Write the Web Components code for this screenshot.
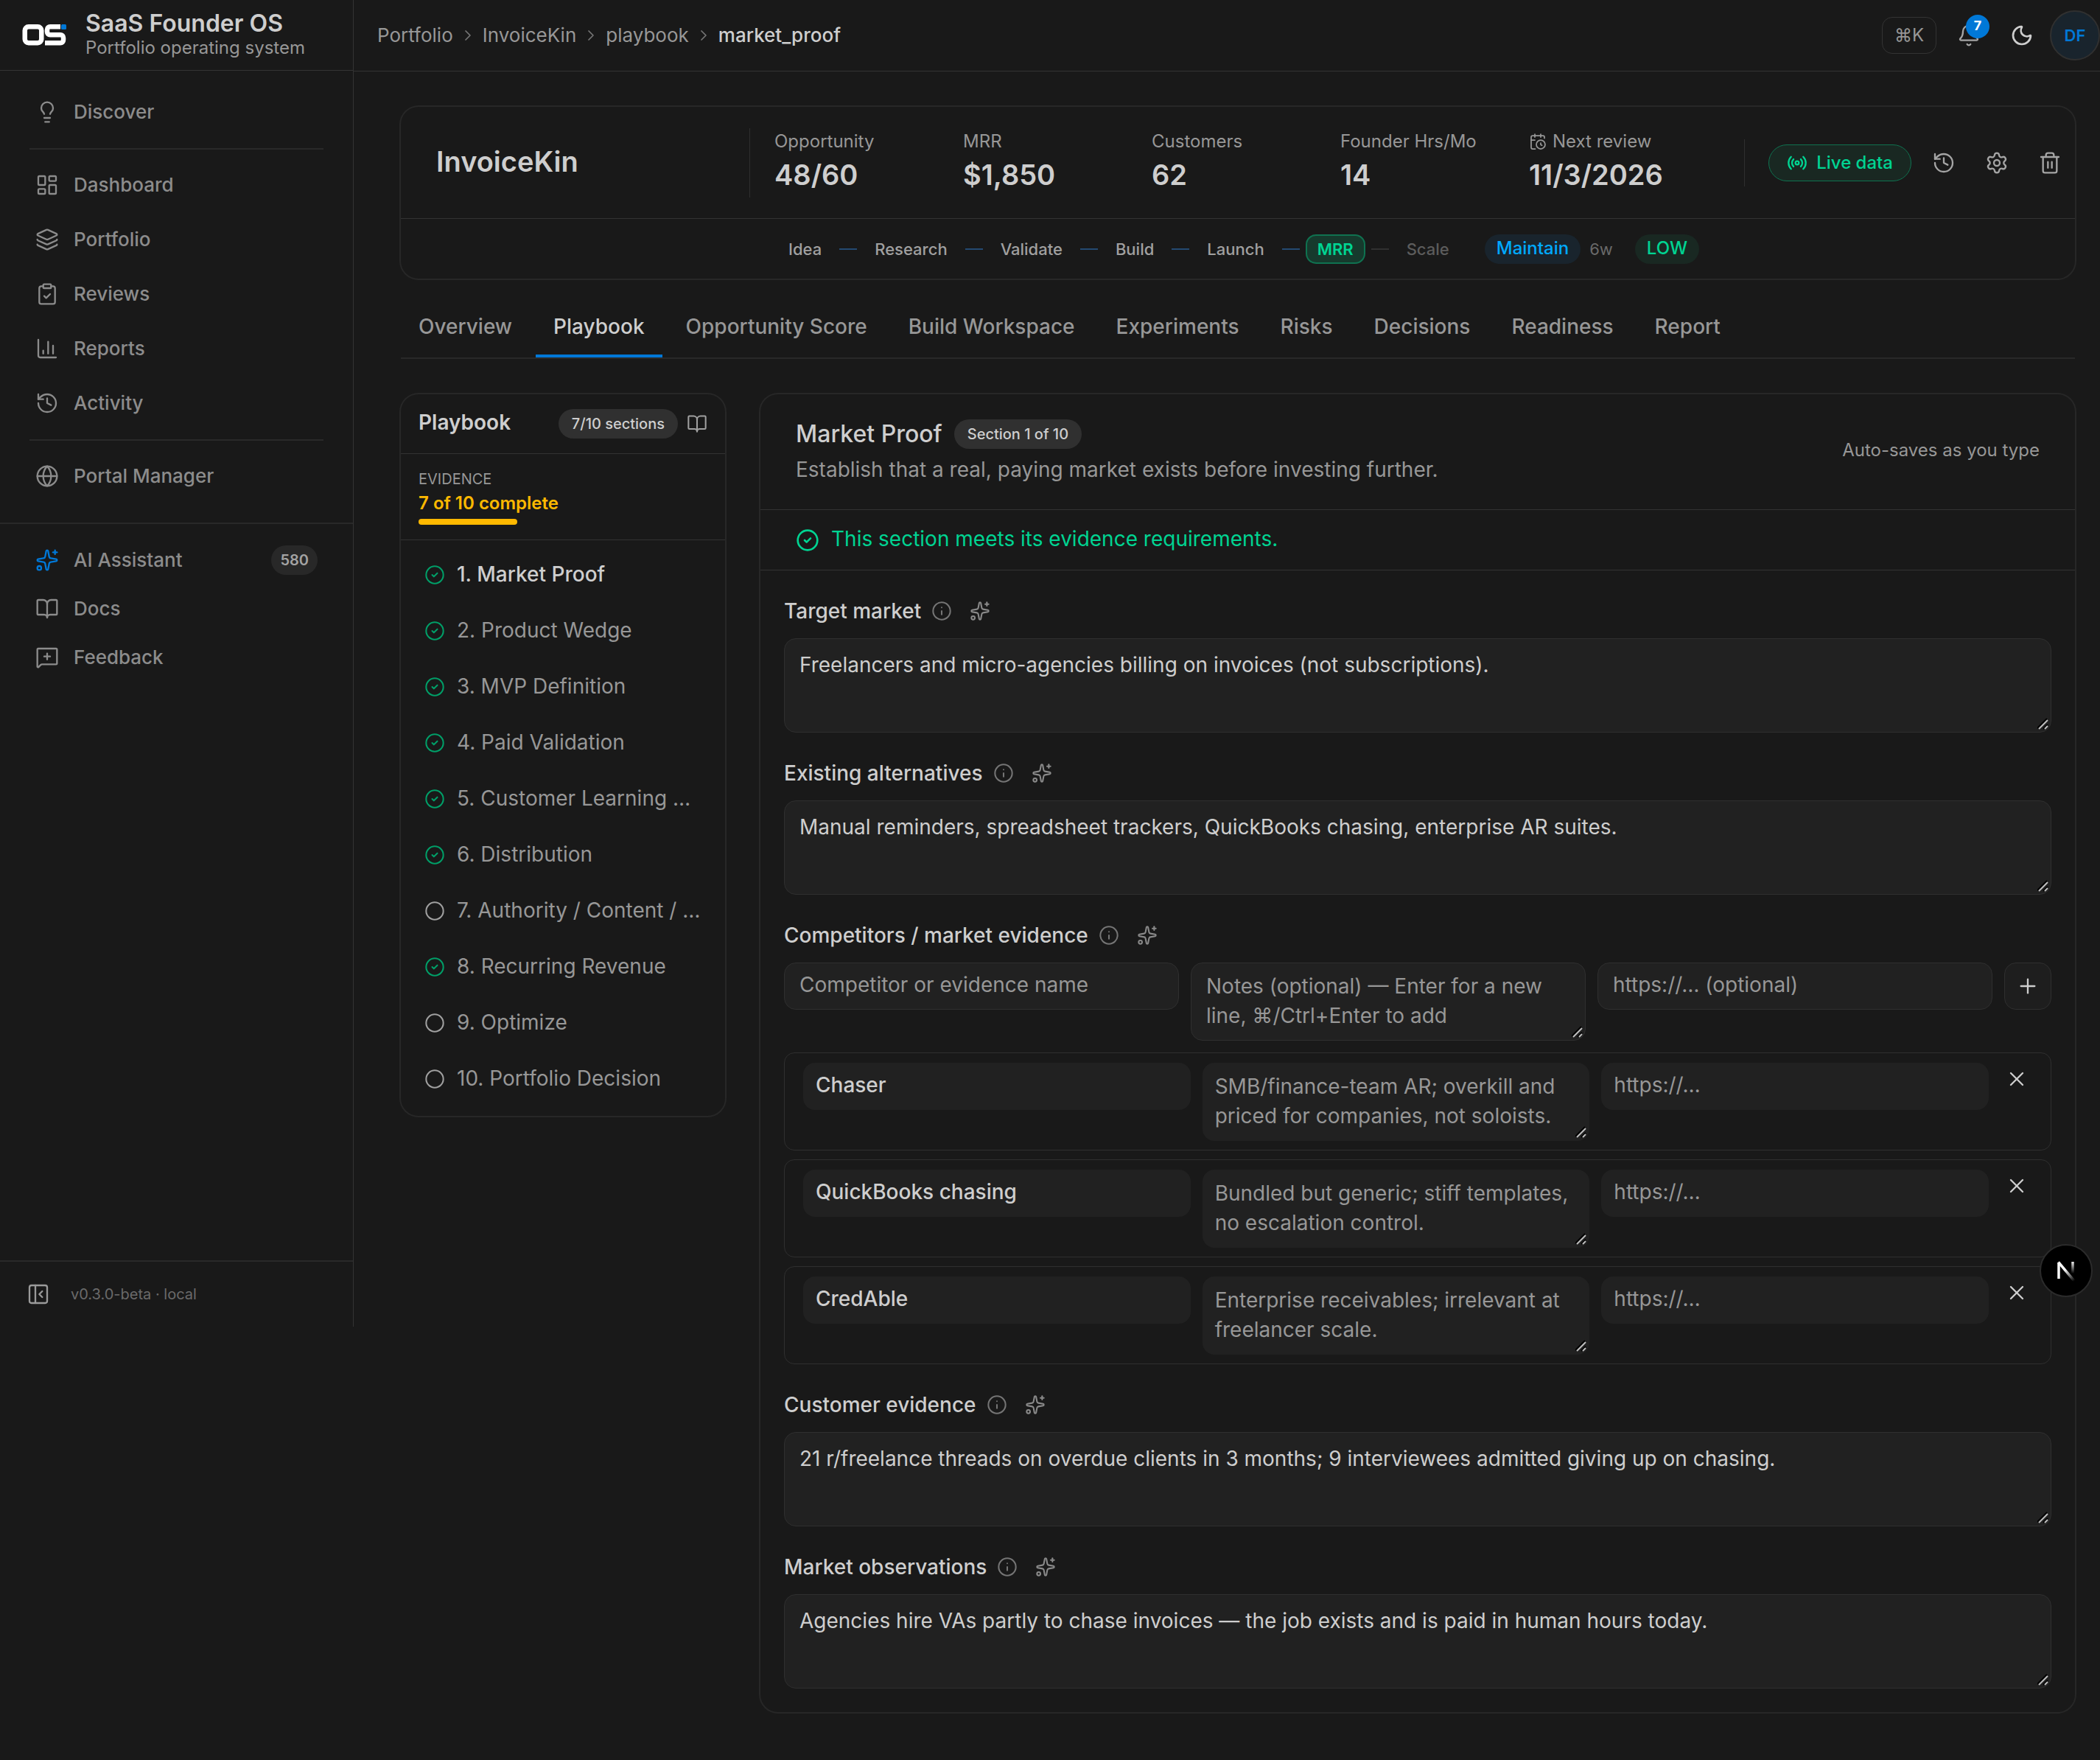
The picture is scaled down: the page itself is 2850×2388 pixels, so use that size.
<!DOCTYPE html>
<html lang="en">
<head>
<meta charset="utf-8">
<title>InvoiceKin · Playbook · SaaS Founder OS</title>
<style>
:root{
  --bg:#191919; --field:#212121; --line:#2f2f2f; --ring:#272727; --chip:#303030;
  --fg:#cecece; --muted:#979797; --nav:#8c8c8c; --dim:#6a6a6a;
  --blue:#0078d7; --green:#00d492; --amber:#ffb900;
}
*{box-sizing:border-box}
html{background:var(--bg)}
body{margin:0;background:var(--bg);color:var(--fg);font:400 28px/40px Inter,"Noto Sans","DejaVu Sans",sans-serif;color-scheme:dark}
</style>
</head>
<body>
<founder-app></founder-app>

<script>
const ICONS = {
  bulb:'<path d="M15 14c.2-1 .7-1.7 1.5-2.5 1-.9 1.5-2.2 1.5-3.5A6 6 0 0 0 6 8c0 1 .2 2.2 1.5 3.5.7.7 1.3 1.5 1.5 2.5"/><path d="M9 18h6"/><path d="M10 22h4"/>',
  dashboard:'<rect width="7" height="9" x="3" y="3" rx="1"/><rect width="7" height="5" x="14" y="3" rx="1"/><rect width="7" height="9" x="14" y="12" rx="1"/><rect width="7" height="5" x="3" y="16" rx="1"/>',
  layers:'<path d="M12.83 2.18a2 2 0 0 0-1.66 0L2.6 6.08a1 1 0 0 0 0 1.83l8.58 3.91a2 2 0 0 0 1.66 0l8.58-3.9a1 1 0 0 0 0-1.83z"/><path d="M2 12a1 1 0 0 0 .58.91l8.6 3.91a2 2 0 0 0 1.65 0l8.58-3.9A1 1 0 0 0 22 12"/><path d="M2 17a1 1 0 0 0 .58.91l8.6 3.91a2 2 0 0 0 1.65 0l8.58-3.9A1 1 0 0 0 22 17"/>',
  clipboard:'<rect width="8" height="4" x="8" y="2" rx="1"/><path d="M16 4h2a2 2 0 0 1 2 2v14a2 2 0 0 1-2 2H6a2 2 0 0 1-2-2V6a2 2 0 0 1 2-2h2"/><path d="m9 14 2 2 4-4"/>',
  chart:'<path d="M3 3v16a2 2 0 0 0 2 2h16"/><path d="M18 17V9"/><path d="M13 17V5"/><path d="M8 17v-3"/>',
  history:'<path d="M3 12a9 9 0 1 0 9-9 9.75 9.75 0 0 0-6.74 2.74L3 8"/><path d="M3 3v5h5"/><path d="M12 7v5l4 2"/>',
  globe:'<circle cx="12" cy="12" r="10"/><path d="M12 2a14.5 14.5 0 0 0 0 20 14.5 14.5 0 0 0 0-20"/><path d="M2 12h20"/>',
  sparkles:'<path d="M11.017 2.814a1 1 0 0 1 1.966 0l1.051 5.558a2 2 0 0 0 1.594 1.594l5.558 1.051a1 1 0 0 1 0 1.966l-5.558 1.051a2 2 0 0 0-1.594 1.594l-1.051 5.558a1 1 0 0 1-1.966 0l-1.051-5.558a2 2 0 0 0-1.594-1.594l-5.558-1.051a1 1 0 0 1 0-1.966l5.558-1.051a2 2 0 0 0 1.594-1.594z"/><path d="M20 2v4"/><path d="M22 4h-4"/><circle cx="4" cy="20" r="2"/>',
  book:'<path d="M12 7v14"/><path d="M3 18a1 1 0 0 1-1-1V4a1 1 0 0 1 1-1h5a4 4 0 0 1 4 4 4 4 0 0 1 4-4h5a1 1 0 0 1 1 1v13a1 1 0 0 1-1 1h-6a3 3 0 0 0-3 3 3 3 0 0 0-3-3z"/>',
  feedback:'<path d="M22 18a1 1 0 0 1-1 1H6.8a2 2 0 0 0-1.4.586l-2.2 2.202A.71.71 0 0 1 2 21.286V4a1 1 0 0 1 1-1h18a1 1 0 0 1 1 1z"/><path d="M12 8v6"/><path d="M9 11h6"/>',
  panel:'<rect width="18" height="18" x="3" y="3" rx="2"/><path d="M9 3v18"/><path d="m16 15-3-3 3-3"/>',
  chevron:'<path d="m9 18 6-6-6-6"/>',
  bell:'<path d="M10.268 21a2 2 0 0 0 3.464 0"/><path d="M3.262 15.326A1 1 0 0 0 4 17h16a1 1 0 0 0 .74-1.673C19.41 13.956 18 12.499 18 8A6 6 0 0 0 6 8c0 4.499-1.411 5.956-2.738 7.326"/>',
  moon:'<path d="M20.985 12.486a9 9 0 1 1-9.473-9.472c.405-.022.617.46.402.803a6 6 0 0 0 8.268 8.268c.344-.215.825-.004.803.401"/>',
  calendar:'<path d="M16 14v2.2l1.6 1"/><path d="M16 2v4"/><path d="M21 7.5V6a2 2 0 0 0-2-2H5a2 2 0 0 0-2 2v14a2 2 0 0 0 2 2h3.5"/><path d="M3 10h5"/><path d="M8 2v4"/><circle cx="16" cy="16" r="6"/>',
  radio:'<path d="M16.247 7.761a6 6 0 0 1 0 8.478"/><path d="M19.075 4.933a10 10 0 0 1 0 14.134"/><path d="M4.925 19.067a10 10 0 0 1 0-14.134"/><path d="M7.753 16.239a6 6 0 0 1 0-8.478"/><circle cx="12" cy="12" r="2"/>',
  gear:'<path d="M9.671 4.136a2.34 2.34 0 0 1 4.659 0 2.34 2.34 0 0 0 3.319 1.915 2.34 2.34 0 0 1 2.33 4.033 2.34 2.34 0 0 0 0 3.831 2.34 2.34 0 0 1-2.33 4.033 2.34 2.34 0 0 0-3.319 1.915 2.34 2.34 0 0 1-4.659 0 2.34 2.34 0 0 0-3.32-1.915 2.34 2.34 0 0 1-2.33-4.033 2.34 2.34 0 0 0 0-3.831A2.34 2.34 0 0 1 6.35 6.051a2.34 2.34 0 0 0 3.319-1.915"/><circle cx="12" cy="12" r="3"/>',
  trash:'<path d="M10 11v6"/><path d="M14 11v6"/><path d="M19 6v14a2 2 0 0 1-2 2H7a2 2 0 0 1-2-2V6"/><path d="M3 6h18"/><path d="M8 6V4a2 2 0 0 1 2-2h4a2 2 0 0 1 2 2v2"/>',
  check:'<circle cx="12" cy="12" r="10"/><path d="m9 12 2 2 4-4"/>',
  circle:'<circle cx="12" cy="12" r="10"/>',
  info:'<circle cx="12" cy="12" r="10"/><path d="M12 16v-4"/><path d="M12 8h.01"/>',
  x:'<path d="M18 6 6 18"/><path d="m6 6 12 12"/>',
  plus:'<path d="M5 12h14"/><path d="M12 5v14"/>'
};

const RESET = `*{box-sizing:border-box}
button{font:inherit;color:inherit;background:none;border:0;padding:0;margin:0;display:inline-flex;align-items:center;justify-content:center;cursor:pointer}
a{color:inherit;text-decoration:none}
h1,h2,h3,p,ul,ol,dl,dt,dd{margin:0;padding:0;font:inherit;list-style:none}`;

function define(tag, css, view){
  customElements.define(tag, class extends HTMLElement{
    connectedCallback(){
      if(this.shadowRoot) return;
      const t = document.createElement('template');
      t.innerHTML = `<style>${RESET}${css}</style>` + view(n => this.getAttribute(n) ?? '', this);
      this.attachShadow({mode:'open'}).append(t.content.cloneNode(true));
    }
  });
}

define('ui-icon', `
:host{display:inline-flex;flex:none;width:32px;height:32px}
:host([small]){width:28px;height:28px}
:host([tiny]){width:24px;height:24px}
svg{width:100%;height:100%;display:block}`,
a => `<svg viewBox="0 0 24 24" fill="none" stroke="currentColor" stroke-width="${a('weight')||'1.75'}" stroke-linecap="round" stroke-linejoin="round" aria-hidden="true">${ICONS[a('name')]}</svg>`);

define('ui-chip', `
:host{display:inline-flex;align-items:center;height:40px;padding:0 18px;border-radius:20px;background:var(--chip);color:var(--fg);font-size:20px;line-height:28px;font-weight:500;white-space:nowrap}
:host([tone=count]){background:#282828;color:#a3a3a3;font-weight:600;padding:0 12px}
:host([tone=info]){background:#19242d;color:#00a9ff;font-size:24px;padding:0 16px 2px}
:host([tone=good]){background:#192822;color:var(--green);font-size:24px;padding:0 16px 2px}`,
() => `<slot></slot>`);

/* ---------- sidebar ---------- */
define('brand-mark', `
:host{display:block;flex:none;width:60px;height:32px}
svg{display:block}`,
() => `<svg width="60" height="32" viewBox="0 0 60 32" aria-hidden="true" fill="none" stroke="#fff" stroke-width="6.5">
<rect x="3.75" y="5.25" width="22.5" height="22" rx="5"/>
<path d="M52 5.25H38a4 4 0 0 0-4 4v3a4 4 0 0 0 4 4h14a4 4 0 0 1 4 4v3a4 4 0 0 1-4 4H31"/>
<rect x="53" y="2" width="7" height="7" rx="1.5" fill="#0078d7" stroke="none"/></svg>`);

define('nav-item', `
:host{display:block}
a{display:flex;align-items:center;gap:20px;height:70px;padding:0 24px;color:var(--nav);font-size:26px;line-height:36px;font-weight:500}
:host([compact]) a{height:66px}
.t{flex:1}
:host([accent]) ui-icon{color:var(--blue)}`,
a => `<a href="#"><ui-icon name="${a('icon')}"></ui-icon><span class="t"><slot></slot></span><slot name="end"></slot></a>`);

define('app-sidebar', `
:host{display:flex;flex-direction:column;flex:none;width:480px;height:1800px;border-right:1px solid #333}
header{display:flex;align-items:center;gap:26px;height:96px;padding:0 0 2px 30px;border-bottom:1px solid #333}
.name{font-size:32px;line-height:36px;font-weight:600}
.sub{font-size:24px;line-height:30px;color:var(--muted)}
nav{padding:21px 24px 28px}
.group{display:flex;flex-direction:column;gap:4px}
hr{border:0;height:2px;background:#292929;margin:14px 16px 13px}
.low{border-top:2px solid #292929;padding:16px 24px;flex:1}
footer{display:flex;align-items:center;gap:28px;height:90px;padding-left:36px;border-top:2px solid #292929;color:var(--dim);font-size:20px;line-height:28px}
footer button{color:#9a9a9a}`,
() => `
<header><brand-mark></brand-mark><div><div class="name">SaaS Founder OS</div><div class="sub">Portfolio operating system</div></div></header>
<nav aria-label="Main">
  <nav-item icon="bulb">Discover</nav-item>
  <hr>
  <div class="group">
    <nav-item icon="dashboard">Dashboard</nav-item>
    <nav-item icon="layers">Portfolio</nav-item>
    <nav-item icon="clipboard">Reviews</nav-item>
    <nav-item icon="chart">Reports</nav-item>
    <nav-item icon="history">Activity</nav-item>
  </div>
  <hr>
  <nav-item icon="globe">Portal Manager</nav-item>
</nav>
<div class="low">
  <nav-item compact accent icon="sparkles">AI Assistant<ui-chip slot="end" tone="count">580</ui-chip></nav-item>
  <nav-item compact icon="book">Docs</nav-item>
  <nav-item compact icon="feedback">Feedback</nav-item>
</div>
<footer><button aria-label="Collapse sidebar"><ui-icon name="panel"></ui-icon></button>v0.3.0-beta · local</footer>`);

/* ---------- top bar ---------- */
define('app-topbar', `
:host{display:flex;align-items:center;justify-content:space-between;height:97px;border-bottom:1px solid #333;padding-left:32px}
nav{display:flex;align-items:center;gap:8px;font-size:26px;line-height:36px;color:var(--muted)}
nav ui-icon{color:#757575}
nav b{font-weight:500;color:var(--fg)}
.right,.icons{display:flex;align-items:center}
.right{gap:10px}.icons{gap:4px}
.key{height:50px;width:74px;border:1px solid #333;border-radius:14px;font-size:24px;line-height:32px;color:var(--muted)}
.icons button{width:68px;height:68px;position:relative}
.bell{color:#a5a5a5}
.n{position:absolute;left:30px;top:6px;width:32px;height:32px;border-radius:50%;background:var(--blue);color:#fff;font-size:18px;line-height:30px;font-weight:700;text-align:center}
.icons .me{border-radius:50%;border:2px solid #303030;background:#19242d;color:var(--blue);font-size:22px;font-weight:600}`,
() => `
<nav aria-label="Breadcrumb"><a href="#">Portfolio</a><ui-icon tiny name="chevron"></ui-icon><a href="#">InvoiceKin</a><ui-icon tiny name="chevron"></ui-icon><a href="#">playbook</a><ui-icon tiny name="chevron"></ui-icon><b>market_proof</b></nav>
<div class="right"><button class="key">⌘K</button>
<div class="icons"><button class="bell" aria-label="Notifications"><ui-icon name="bell"></ui-icon><span class="n">7</span></button><button aria-label="Theme"><ui-icon name="moon" weight="2"></ui-icon></button><button class="me">DF</button></div></div>`);

/* ---------- project header ---------- */
define('stat-item', `
:host{display:block;width:256px}
dl{padding-bottom:4px}
dt{display:flex;align-items:center;gap:8px;font-size:24px;line-height:36px;color:var(--muted)}
dd{font-size:38px;line-height:54px;font-weight:600;white-space:nowrap}`,
a => `<dl><dt>${a('icon')?`<ui-icon tiny name="${a('icon')}"></ui-icon>`:''}${a('label')}</dt><dd><slot></slot></dd></dl>`);

define('stage-track', `
:host{display:flex;align-items:center;gap:8px;font-size:22px;line-height:28px;font-weight:500;color:#a0a0a0}
span{padding:0 16px}
i{width:24px;height:2px;background:#244a72}
i.off{background:#303030}
.on{border:2px solid #0f7250;background:#163a2d;color:var(--green);font-weight:600;border-radius:14px;padding:0 14px;height:40px;line-height:36px}
.next{color:#5c5c5c}`,
() => ['Idea','Research','Validate','Build','Launch'].map(s => `<span>${s}</span><i></i>`).join('') + `<span class="on">MRR</span><i class="off"></i><span class="next">Scale</span>`);

define('project-header', `
:host{display:block;border-radius:24px;box-shadow:0 0 0 2px var(--ring)}
.top{display:flex;align-items:center;height:152px;border-bottom:1px solid #333;padding-left:48px}
h1{width:425px;font-size:38px;line-height:54px;font-weight:600;padding-bottom:4px}
.stats{display:flex;flex:1;border-left:1px solid var(--line);padding-left:33px}
.acts{display:flex;align-items:center;height:64px;border-left:1px solid var(--line);padding-left:32px;gap:4px;color:#a5a5a5}
.acts button{width:68px;height:50px}
.acts .live{width:auto;padding:0 24px;gap:12px;border:1px solid #0f7250;border-radius:25px;background:#192822;color:var(--green);font-size:24px;line-height:32px;font-weight:500;margin-right:6px}
.bottom{display:flex;align-items:center;justify-content:center;height:81px}
.tags{display:flex;align-items:center;gap:12px;margin-left:32px;font-size:22px;line-height:28px;color:var(--dim)}
.tags .w{margin-right:18px}`,
() => `
<div class="top"><h1>InvoiceKin</h1>
<div class="stats"><stat-item label="Opportunity">48/60</stat-item><stat-item label="MRR">$1,850</stat-item><stat-item label="Customers">62</stat-item><stat-item label="Founder Hrs/Mo">14</stat-item><stat-item label="Next review" icon="calendar">11/3/2026</stat-item></div>
<div class="acts"><button class="live"><ui-icon small name="radio" weight="2"></ui-icon>Live data</button><button aria-label="History"><ui-icon name="history"></ui-icon></button><button aria-label="Settings"><ui-icon name="gear"></ui-icon></button><button aria-label="Delete"><ui-icon name="trash"></ui-icon></button></div></div>
<div class="bottom"><stage-track></stage-track><div class="tags"><ui-chip tone="info">Maintain</ui-chip><span class="w">6w</span><ui-chip tone="good">LOW</ui-chip></div></div>`);

define('tab-bar', `
:host{display:flex;gap:8px;border-bottom:2px solid #292929;height:84px}
a{display:flex;align-items:center;height:82px;padding:2px 24px 0;border-bottom:4px solid transparent;font-size:28px;font-weight:500;color:var(--muted)}
a[aria-current]{color:var(--fg);border-color:var(--blue)}`,
() => ['Overview','Playbook','Opportunity Score','Build Workspace','Experiments','Risks','Decisions','Readiness','Report'].map(t => `<a href="#"${t==='Playbook'?' aria-current="page"':''}>${t}</a>`).join(''));

/* ---------- playbook index ---------- */
define('step-item', `
:host{display:block}
a{display:flex;align-items:center;gap:16px;height:76px;padding:0 24px 0 32px;color:var(--muted);white-space:nowrap;overflow:hidden}
span{padding-bottom:2px}
ui-icon{color:#a0a0a0}
:host([done]) ui-icon{color:#009f68}
:host([current]) a{color:var(--fg);font-weight:500}`,
(a,el) => `<a href="#"><ui-icon small name="${el.hasAttribute('done')?'check':'circle'}"></ui-icon><span><slot></slot></span></a>`);

define('playbook-index', `
:host{display:block;border-radius:24px;box-shadow:0 0 0 2px var(--ring)}
header{display:flex;align-items:center;gap:12px;height:81px;padding:0 24px;border-bottom:1px solid #333}
h2{flex:1;font-weight:600;padding-bottom:4px}
header ui-icon{color:#a0a0a0}
.ev{height:117px;padding:19px 24px 0;border-bottom:1px solid #333}
.k{font-size:20px;line-height:30px;color:var(--muted)}
.v{font-size:24px;line-height:36px;font-weight:600;color:var(--amber)}
.bar{width:192px;height:8px;margin-top:3px}
.bar div{width:70%;height:8px;border-radius:4px;background:var(--amber)}
.list{padding:9px 0 12px}`,
() => `
<header><h2>Playbook</h2><ui-chip>7/10 sections</ui-chip><ui-icon small name="book"></ui-icon></header>
<div class="ev"><div class="k">EVIDENCE</div><div class="v">7 of 10 complete</div><div class="bar"><div></div></div></div>
<div class="list">
<step-item done current>1. Market Proof</step-item><step-item done>2. Product Wedge</step-item><step-item done>3. MVP Definition</step-item><step-item done>4. Paid Validation</step-item><step-item done>5. Customer Learning …</step-item><step-item done>6. Distribution</step-item><step-item>7. Authority / Content / …</step-item><step-item done>8. Recurring Revenue</step-item><step-item>9. Optimize</step-item><step-item>10. Portfolio Decision</step-item></div>`);

/* ---------- form ---------- */
const FIELD = `
input,textarea{display:block;width:100%;margin:0;font:400 28px/40px Inter,"Noto Sans","DejaVu Sans",sans-serif;color:var(--fg);background:var(--field);border:1px solid var(--line);border-radius:16px;outline:0;resize:none;overflow:hidden}
::placeholder{color:var(--muted);opacity:1}
input{height:64px;padding:0 20px 4px}
textarea{height:106px;padding:11px 20px 13px}
.area{position:relative}
.grip{position:absolute;right:4px;bottom:4px;width:15px;height:16px}`;
const GRIP = `<svg class="grip" viewBox="0 0 15 16" fill="none" stroke-width="2" aria-hidden="true"><path d="M0 14 13 1M8 15l6-6" stroke="#000"/><path d="M2 15 14 3M10 15l4-4" stroke="#bdbdbd"/></svg>`;
const LABEL = `
.label{display:flex;align-items:center;height:46px;margin-bottom:14px;font-weight:500;color:var(--fg)}
.label ui-icon{margin-left:14px;color:#757575}
.label button{margin-left:24px}
.label button ui-icon{margin:0;color:#8a8a8a}`;
const labelRow = (text,id) => `<div class="label"><label for="${id}">${text}</label><ui-icon small name="info"></ui-icon><button aria-label="Suggest ${text}"><ui-icon small name="sparkles"></ui-icon></button></div>`;

define('text-field', `:host{display:block}${FIELD}${LABEL} textarea{height:128px;padding-top:15px}`,
(a,el) => `${labelRow(a('label'),'f')}<div class="area"><textarea id="f">${el.textContent.trim()}</textarea>${GRIP}</div>`);

define('evidence-row', `
:host{display:grid;grid-template-columns:1fr 1fr 1fr 44px;gap:16px;align-items:start;border:1px solid var(--line);border-radius:14px;padding:13px 24px 12px 25px}
${FIELD}
input,textarea{border-color:transparent;padding-left:16px;padding-right:14px}
.name{font-weight:500}
textarea{color:var(--muted)}
button{height:44px}`,
(a,el) => `<input class="name" aria-label="Name" value="${a('name')}"><div class="area"><textarea aria-label="Notes">${el.textContent.trim()}</textarea>${GRIP}</div><input aria-label="Link" placeholder="https://…"><button aria-label="Remove"><ui-icon name="x"></ui-icon></button>`);

define('evidence-list', `
:host{display:block}${FIELD}${LABEL}
.add{display:grid;grid-template-columns:1fr 1fr 1fr 64px;gap:16px;align-items:start;margin-bottom:16px}
.add button{height:64px;border:1px solid var(--line);border-radius:16px;background:#1e1e1e}
.rows{display:grid;gap:12px}`,
() => `${labelRow('Competitors / market evidence','c')}
<div class="add"><input id="c" placeholder="Competitor or evidence name"><div class="area"><textarea aria-label="Notes" placeholder="Notes (optional) — Enter for a new line, ⌘/Ctrl+Enter to add"></textarea>${GRIP}</div><input aria-label="Link" placeholder="https://… (optional)"><button aria-label="Add"><ui-icon name="plus"></ui-icon></button></div>
<div class="rows">
<evidence-row name="Chaser">SMB/finance-team AR; overkill and priced for companies, not soloists.</evidence-row>
<evidence-row name="QuickBooks chasing">Bundled but generic; stiff templates, no escalation control.</evidence-row>
<evidence-row name="CredAble">Enterprise receivables; irrelevant at freelancer scale.</evidence-row></div>`);

define('section-panel', `
:host{display:block;border-radius:24px;box-shadow:0 0 0 2px var(--ring)}
header{display:flex;align-items:center;justify-content:space-between;height:157px;padding:0 48px;border-bottom:1px solid #333}
.t{display:flex;align-items:center;gap:16px;margin-bottom:8px}
h2{font-size:32px;line-height:40px;font-weight:500}
p{color:var(--muted)}
.auto{font-size:24px;line-height:32px;padding-bottom:4px;color:var(--muted)}
.ok{display:flex;align-items:center;gap:16px;height:82px;padding:0 48px;border-bottom:1px solid #333;color:var(--green)}
.ok span{padding-bottom:4px}
.body{display:grid;gap:32px;padding:32px}`,
() => `
<header><div><div class="t"><h2>Market Proof</h2><ui-chip>Section 1 of 10</ui-chip></div><p>Establish that a real, paying market exists before investing further.</p></div><span class="auto">Auto-saves as you type</span></header>
<div class="ok"><ui-icon name="check" weight="2"></ui-icon><span>This section meets its evidence requirements.</span></div>
<div class="body">
<text-field label="Target market">Freelancers and micro-agencies billing on invoices (not subscriptions).</text-field>
<text-field label="Existing alternatives">Manual reminders, spreadsheet trackers, QuickBooks chasing, enterprise AR suites.</text-field>
<evidence-list></evidence-list>
<text-field label="Customer evidence">21 r/freelance threads on overdue clients in 3 months; 9 interviewees admitted giving up on chasing.</text-field>
<text-field label="Market observations">Agencies hire VAs partly to chase invoices — the job exists and is paid in human hours today.</text-field>
</div>`);

define('dev-badge', `
:host{position:absolute;right:10px;top:1688px}
button{width:72px;height:72px;border-radius:50%;background:#000;border:2px solid #2b2b2b}
svg{display:block}`,
() => `<button aria-label="Developer tools"><svg width="30" height="32" viewBox="0 0 30 32" fill="none" stroke-width="3.5"><defs><linearGradient id="a" x1="14" y1="14" x2="26" y2="30" gradientUnits="userSpaceOnUse"><stop stop-color="#fff"/><stop offset="1" stop-color="#fff" stop-opacity="0"/></linearGradient><linearGradient id="b" x1="0" y1="3" x2="0" y2="20" gradientUnits="userSpaceOnUse"><stop stop-color="#fff"/><stop offset="1" stop-color="#fff" stop-opacity="0"/></linearGradient></defs><path d="M5 27V5" stroke="#fff"/><path d="M4.5 4.500 26 30" stroke="url(#a)"/><path d="M24 4v16" stroke="url(#b)"/></svg></button>`);

define('founder-app', `
:host{display:flex;align-items:flex-start;position:relative;min-height:100vh}
.main{flex:1;min-width:0}
main{padding:48px 34px 61px 64px}
tab-bar{margin-top:25px}
.cols{display:grid;grid-template-columns:440px minmax(0,1fr);gap:48px;align-items:start;margin-top:48px}`,
() => `
<app-sidebar></app-sidebar>
<div class="main"><app-topbar></app-topbar>
<main><project-header></project-header><tab-bar></tab-bar>
<div class="cols"><playbook-index></playbook-index><section-panel></section-panel></div></main></div>
<dev-badge></dev-badge>`);
</script>
</body>
</html>
